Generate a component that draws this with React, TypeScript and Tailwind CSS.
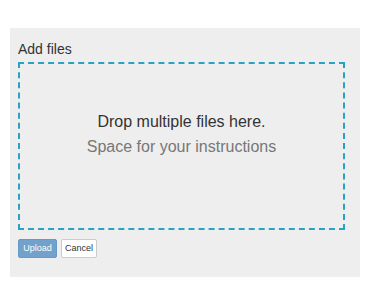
export default function App() {
  return (
    <div className="w-[370px] h-[300px] bg-white pt-[28px] pl-[10px] font-['Liberation_Sans',Arial,sans-serif]">
      <div className="w-[350px] h-[249px] bg-[#eeeeee] pl-[8px] pr-[15px] pt-[11px]">
        <h2 className="text-[14px] leading-[20px] text-[#333]">Add files</h2>
        <div className="mt-[3px] h-[168px] border-2 border-dashed border-[#2aa2c4] flex flex-col items-center pt-[45px]">
          <p className="text-[16px] leading-[25px] text-[#333]">Drop multiple files here.</p>
          <p className="text-[16px] leading-[25px] text-[#777]">Space for your instructions</p>
        </div>
        <div className="mt-[9px] flex gap-[4px]">
          <button
            type="button"
            className="h-[19px] w-[39px] rounded-[2px] bg-[#72a1cc] border border-[#6a98c4] text-white text-[9px]"
          >
            Upload
          </button>
          <button
            type="button"
            className="h-[19px] w-[36px] rounded-[2px] bg-white border border-[#ccc] text-[#333] text-[9px]"
          >
            Cancel
          </button>
        </div>
      </div>
    </div>
  )
}
